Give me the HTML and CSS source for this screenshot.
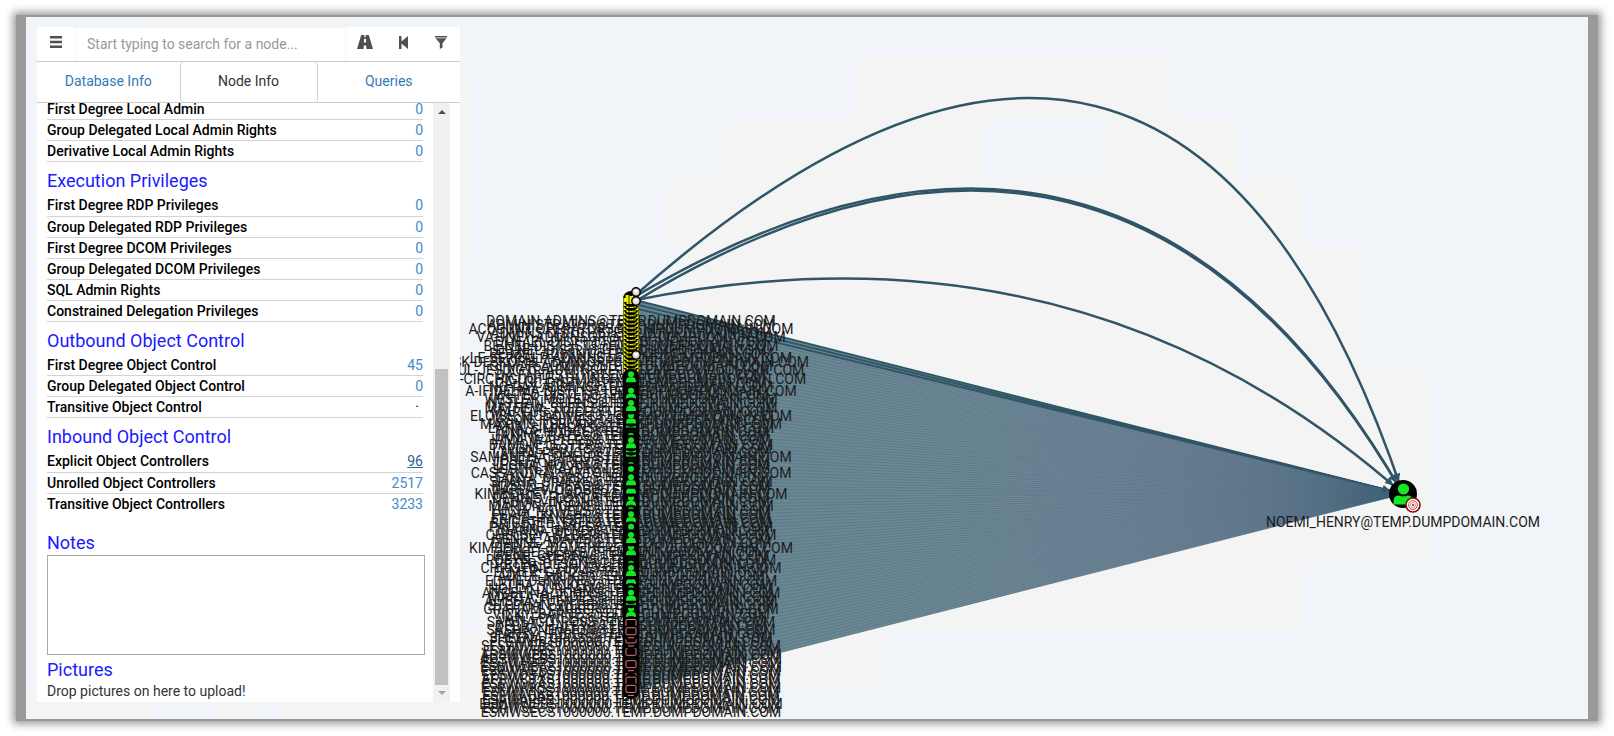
FILE: index.html
```html
<!DOCTYPE html>
<html lang="en">
<head>
<meta charset="utf-8">
<title>Node Info</title>
<link rel="stylesheet" href="styles.css">
</head>
<body>
<div class="backdrop">
<main class="app">
  <svg class="graph" viewBox="26 17 1562 702" role="img" aria-label="Inbound object control graph">
    <g class="tiles">
      <rect x="856" y="55" width="316" height="63"/>
      <rect x="725" y="118" width="258" height="63"/>
      <rect x="1107" y="118" width="131" height="63"/>
      <rect x="664" y="181" width="639" height="66"/>
      <rect x="683" y="247" width="682" height="126"/>
      <rect x="838" y="373" width="592" height="192"/>
      <rect x="780" y="565" width="523" height="65"/>
      <rect x="280" y="630" width="602" height="63"/>
      <rect x="215" y="693" width="43" height="26"/>
      <rect x="280" y="693" width="500" height="26"/>
      <rect x="26" y="693" width="126" height="26"/>
      <rect x="150" y="17" width="194" height="12"/>
      <rect x="460" y="80" width="11" height="190"/>
    </g>
    <defs>
      <linearGradient id="fan" x1="0" x2="1" y1="0" y2="0">
        <stop offset="0" stop-color="#67868f"/>
        <stop offset="0.5" stop-color="#6f8896"/>
        <stop offset="0.7" stop-color="#758798"/>
        <stop offset="0.93" stop-color="#738496"/>
        <stop offset="1" stop-color="#4d6b80"/>
      </linearGradient>
    </defs>
    <polygon points="631,299 1403,494 631,691" fill="url(#fan)"/>
    <g id="edges" class="edges"></g>
    <g id="labels" class="labels"></g>
    <g id="nodes"></g>
    <g>
      <circle cx="1403" cy="494" r="14"/>
      <circle cx="1403.500" cy="489" r="5.600" fill="#17e625"/>
      <path d="M1393.500 504.500v-3.500q0-5.500 5.500-5.500q4 1.700 8.500 0q5.200 0 5.200 5.500v3.500z" fill="#17e625"/>
      <circle cx="1413" cy="505" r="7" fill="#fff" stroke="#8c0d0d" stroke-width="1.600"/>
      <circle cx="1413" cy="505" r="4.400" fill="none" stroke="#b33" stroke-width=".9"/>
      <circle cx="1413" cy="505" r="2.600" fill="none" stroke="#b33" stroke-width=".5"/>
      <circle cx="1413" cy="505" r="1" fill="#a11"/>
      <text class="target" x="1403" y="527">NOEMI_HENRY@TEMP.DUMPDOMAIN.COM</text>
    </g>
  </svg>

  <section class="panel">
    <header class="search">
      <button class="tool menu" type="button" aria-label="More info">
        <svg width="12" height="12" viewBox="0 0 12 12"><path d="M0 0h12v2.600H0zM0 4.700h12v2.600H0zM0 9.400h12V12H0z"/></svg>
      </button>
      <input class="query" type="text" placeholder="Start typing to search for a node..." aria-label="Search for a node">
      <button class="tool" type="button" aria-label="Pathfinding">
        <svg width="16" height="14" viewBox="0 0 16 14"><path d="M4.200 0h3.200L7.200 2h1.600L8.600 0h3.200L16 14H9.400L9.200 10.500H6.800L6.600 14H0zM7.100 3.800L6.900 7.500h2.200L8.900 3.800z" fill-rule="evenodd"/></svg>
      </button>
      <button class="tool" type="button" aria-label="Back">
        <svg width="9" height="13" viewBox="0 0 9 13"><path d="M0 0h2.500v5.600L9 0v13L2.500 7.400V13H0z"/></svg>
      </button>
      <button class="tool" type="button" aria-label="Filter edge types">
        <svg width="12" height="13" viewBox="0 0 12 13"><path d="M0 0h12v1.500H0zM.5 2.300h11L7.500 7.300V11.500L4.800 13V7.300z"/></svg>
      </button>
    </header>
    <nav class="tabs">
      <a class="tab" href="#database">Database Info</a>
      <a class="tab active" href="#node" aria-current="page">Node Info</a>
      <a class="tab" href="#queries">Queries</a>
    </nav>
    <div class="body">
      <div class="content">
        <table>
          <tr><th scope="row">First Degree Local Admin</th><td><a href="#n">0</a></td></tr>
          <tr><th scope="row">Group Delegated Local Admin Rights</th><td><a href="#n">0</a></td></tr>
          <tr><th scope="row">Derivative Local Admin Rights</th><td><a href="#n">0</a></td></tr>
        </table>
        <h2>Execution Privileges</h2>
        <table>
          <tr><th scope="row">First Degree RDP Privileges</th><td><a href="#n">0</a></td></tr>
          <tr><th scope="row">Group Delegated RDP Privileges</th><td><a href="#n">0</a></td></tr>
          <tr><th scope="row">First Degree DCOM Privileges</th><td><a href="#n">0</a></td></tr>
          <tr><th scope="row">Group Delegated DCOM Privileges</th><td><a href="#n">0</a></td></tr>
          <tr><th scope="row">SQL Admin Rights</th><td><a href="#n">0</a></td></tr>
          <tr><th scope="row">Constrained Delegation Privileges</th><td><a href="#n">0</a></td></tr>
        </table>
        <h2>Outbound Object Control</h2>
        <table>
          <tr><th scope="row">First Degree Object Control</th><td><a href="#n">45</a></td></tr>
          <tr><th scope="row">Group Delegated Object Control</th><td><a href="#n">0</a></td></tr>
          <tr><th scope="row">Transitive Object Control</th><td><span class="loading">·</span></td></tr>
        </table>
        <h2>Inbound Object Control</h2>
        <table class="last">
          <tr><th scope="row">Explicit Object Controllers</th><td><a class="hovered" href="#n">96</a></td></tr>
          <tr><th scope="row">Unrolled Object Controllers</th><td><a href="#n">2517</a></td></tr>
          <tr><th scope="row">Transitive Object Controllers</th><td><a href="#n">3233</a></td></tr>
        </table>
        <h2 class="notes-title"><label for="notes">Notes</label></h2>
        <textarea id="notes"></textarea>
        <h2 class="pictures-title">Pictures</h2>
        <p class="drop">Drop pictures on here to upload!</p>
      </div>
      <div class="scrollbar" aria-hidden="true">
        <svg width="8" height="4" viewBox="0 0 8 4"><path d="M0 4L4 0l4 4z" fill="#505050"/></svg>
        <div class="track"><div class="thumb"></div></div>
        <svg width="8" height="4" viewBox="0 0 8 4"><path d="M0 0l4 4 4-4z" fill="#a3a3a3"/></svg>
      </div>
    </div>
  </section>
</main>
</div>
<script src="graph.js"></script>
</body>
</html>
```

FILE: styles.css
```css
* { box-sizing: border-box; }

body {
  margin: 0;
  height: 100vh;
  display: flex;
  padding: 15px 16px;
  background: #fff;
  font-family: Roboto, "Liberation Sans", sans-serif;
  font-size: 14px;
  line-height: 20px;
  color: #333;
}

.backdrop {
  flex: 1;
  display: flex;
  padding: 2px 10px;
  background: #999;
  box-shadow: 0 0 8px 3px #999;
}

.app {
  flex: 1;
  display: grid;
  grid-template: minmax(0, 1fr) / minmax(0, 1fr);
  background: #f1f5fa;
  overflow: hidden;
}

.graph {
  grid-area: 1 / 1;
  width: 100%;
  height: 100%;
}

.tiles { fill: #f4f4f4; }
.edges { fill: none; stroke: #2f5566; }
.edges .straight { stroke: #46677c; stroke-width: 1; opacity: 0.4; }
.edges .top { stroke-width: 2; }
.edges .curve { stroke-width: 2.5; }
.edges .arrow { fill: #2f5566; stroke: none; }
.labels text, .target { font-size: 14px; text-anchor: middle; fill: #1c1c1c; }

.panel {
  grid-area: 1 / 1;
  justify-self: start;
  width: 423px;
  margin: 10px 11px 17px;
  display: flex;
  flex-direction: column;
  background: #fff;
  min-height: 0;
}

.search {
  display: flex;
  height: 35px;
  border-bottom: 1px solid #ccc;
}

.tool {
  width: 38px;
  padding: 0 0 4px;
  border: 0;
  background: none;
  display: flex;
  align-items: center;
  justify-content: center;
  fill: #505050;
}

.query {
  flex: 1;
  min-width: 0;
  border: 1px solid #f6f6f6;
  border-bottom: 0;
  padding: 0 11px 2px;
  font: inherit;
  color: #333;
}

.query::placeholder { color: #999; opacity: 1; }

.tabs {
  display: flex;
  height: 41px;
  border-bottom: 1px solid #ccc;
}

.tab {
  flex: 1;
  text-align: center;
  line-height: 38px;
  color: #337ab7;
  text-decoration: none;
}

.tab.active {
  flex: 0 0 138px;
  border: 1px solid #ccc;
  border-width: 0 1px;
  border-radius: 4px;
  color: #333;
}

.body {
  flex: 1;
  min-height: 0;
  display: flex;
  padding: 0 10px;
}

.content {
  flex: 1;
  display: flex;
  flex-direction: column;
  justify-content: flex-end;
  overflow: hidden;
  padding-right: 8px;
}

table {
  width: calc(100% - 2px);
  flex: none;
  border-collapse: collapse;
  color: #000;
}

th, td {
  height: 21px;
  padding: 0;
  border-bottom: 1px solid #d3d3d3;
  font-weight: 500;
  line-height: 20px;
  text-align: left;
}

td { text-align: right; font-weight: 400; }
td a { color: #428bca; text-decoration: none; }
td a.hovered { color: #2a6496; text-decoration: underline; }
.loading { padding-right: 4px; }
.last tr:last-child > * { border-bottom: 0; }

h2 {
  flex: none;
  margin: 0;
  padding-top: 9px;
  height: 33px;
  font-size: 18px;
  line-height: 20px;
  font-weight: 400;
  color: #1a1aff;
}

.notes-title { height: 41px; padding-top: 19px; }

textarea {
  flex: none;
  height: 100px;
  margin: 0;
  border: 1px solid #a9a9a9;
  resize: none;
  font: inherit;
}

.pictures-title { height: 26px; padding-top: 5px; }
.drop { flex: none; margin: 0; height: 21px; }

.scrollbar {
  width: 17px;
  background: #f1f1f1;
  display: flex;
  flex-direction: column;
  align-items: center;
  padding: 7px 0;
}

.track {
  flex: 1;
  width: 13px;
  padding: 6px 0;
  display: flex;
  flex-direction: column;
  justify-content: flex-end;
}

.thumb { height: 56%; background: #c1c1c1; }
```

FILE: graph.js
```js
const NS = "http://www.w3.org/2000/svg";
const DOMAIN = "TEMP.DUMPDOMAIN.COM";
const COLUMN_X = 631;
const FIRST_Y = 299;
const STEP = 4.12;
const TARGET = { x: 1403, y: 494 };

const groups = [
  "DOMAIN ADMINS", "ADMINISTRATOR", "ACCOUNT OPERATORS", "ADMINS-DIST01", "VA-JNEY-ADMINSGR",
  "DI-NAEL-DIST1", "BE-NEL-DISTLIST1", "DE-NEL-DISTLI", "RE-MEL-ADMIN1", "LE-SERRALP-ADMINS1",
  "SK-DESKOFHI-ADMINGRP01", "GI-MAR-ADMINS", "UL-JESDIGTR-ADMINGRP1", "DA-FAI-DISTL1",
  "I-CIRCHIGUOTE-ADMINGR1", "CA-LUC-DISTLI", "NO-RAY-ADMINS", "A-IFIDELMA-DISTLIST10", "WI-TED-DISTL1"
];
const users = [
  "WESLEY_MOYERS", "NATHAN_BURNS", "MATHEW_STEELE", "MARCUS_PRICE", "ELOISE_MCDOWELL12",
  "JASON_HOLMES", "MAXIMO_LEBLANC", "LANA_SIMMONS", "TONYA_HODGE", "JANINE_BATES",
  "IRMA_WALTERS", "DAMON_LESTER", "TYRONE_POTTS", "LAURA_PRINCE", "SAMANTHA_PHELPS1",
  "JOSEFA_BARRY", "LEONA_NOLAN", "JUSTIN_MAYER", "CASSANDRA_SAXTON", "TANYA_MORSE",
  "SHANA_SPARKS", "RUSSELL_HEAD", "DARLA_WOODS", "KIMBERLEY_HARPER", "DENNIS_FLOYD",
  "NADIA_VINSON", "MARION_HORNE", "LUCIA_POWERS", "PEARL_KNIGHT", "ERICA_HANSEN",
  "BRIGETTE_TATE", "PAULINE_HAYES", "JOANNA_BOYD", "CHELSEY_WEBER", "HENRY_ADAMS",
  "DIANNE_MEYER", "KIMBERLEY_DOUGHER", "JORGE_BLAKE", "IRENE_GUERRA", "ROBYN_STEVENS",
  "PETER_OLSON", "CHRISTINE_FINLEY", "ELMER_GARZA", "ADELE_HICKS", "ELVIN_DUNNING1",
  "LETHA_TUCKER", "HOLLY_DURHAM", "ANGELINA_JOHNS", "MARTA_RHODES", "ALISHA_FUENTES",
  "STEPHAN_WEBB", "GRAHAM_PARKER", "VICKY_BARNES", "JAN_FOWLER", "SANTIAGO_ROSS",
  "DEBRA_HALEY", "SASHA_NEWTON", "PANSY_HUBER", "SHEENA_GROSS"
];
const computers = [
  "FLEWVIR", "SESWWEBS", "ESMWVIRS", "ABSWWEBS", "ADSWWEBS", "ESTWAPPS", "ESMWDBAS", "ESRWWEBS", "EESWDBAS",
  "APPWCTXS", "ESRWDBAS", "FSRWWKSS", "ESMWVIRS", "FSEWADAS", "ESAWAPPS", "EEMWWEBS", "EBRWSECS", "ESMWSECS"
];

const rows = [
  ...groups.map(name => ({ kind: "group", label: `${name}@${DOMAIN}` })),
  ...users.map(name => ({ kind: "user", label: `${name}@${DOMAIN}` })),
  ...computers.map(name => ({ kind: "computer", label: `${name}1000000.${DOMAIN}` }))
];
rows.forEach((row, i) => { row.y = FIRST_Y + i * STEP; });

function add(parent, tag, attrs, text) {
  const el = document.createElementNS(NS, tag);
  for (const key in attrs) el.setAttribute(key, attrs[key]);
  if (text) el.textContent = text;
  parent.appendChild(el);
  return el;
}

const edges = document.getElementById("edges");
const labels = document.getElementById("labels");
const nodes = document.getElementById("nodes");

function arrow(fromX, fromY) {
  const a = Math.atan2(TARGET.y - fromY, TARGET.x - fromX);
  const point = (r, side) =>
    `${TARGET.x - r * Math.cos(a) - side * Math.sin(a)},${TARGET.y - r * Math.sin(a) + side * Math.cos(a)}`;
  add(edges, "polygon", { class: "arrow", points: [point(13, 0), point(21, 4), point(21, -4)].join(" ") });
}

rows.forEach((row, i) => {
  add(edges, "line", {
    class: i < 3 ? "top" : "straight", x1: COLUMN_X, y1: row.y, x2: TARGET.x, y2: TARGET.y
  });
  add(labels, "text", { x: COLUMN_X, y: row.y + 27 }, row.label);
});
arrow(COLUMN_X, FIRST_Y);

/* Parallel relationships bow upwards from the first nodes. */
[[299, 1175, -184], [299, 1122, 5], [304, 1118, 5], [301, 1080, 209]].forEach(([y, cx, cy]) => {
  add(edges, "path", { class: "curve", d: `M${COLUMN_X} ${y}Q${cx} ${cy} ${TARGET.x} ${TARGET.y}` });
  arrow(cx, cy);
});

const glyphs = {
  group(x, y) {
    add(nodes, "path", {
      d: `M${x - 7.5} ${y + 3}v-4h2v-3h4v1h3v-1h4v3h2v4h-3v2h-9v-2z`, fill: "#eeee00"
    });
    add(nodes, "path", { d: `M${x - 2} ${y - 4}v9M${x + 3} ${y - 4}v9`, stroke: "#000", "stroke-width": 0.8 });
  },
  user(x, y) {
    add(nodes, "circle", { cx: x, cy: y - 3, r: 3, fill: "#17e625" });
    add(nodes, "path", { d: `M${x - 5} ${y + 5}q0-5 3-5h4q3 0 3 5z`, fill: "#17e625" });
  },
  computer(x, y) {
    add(nodes, "rect", {
      x: x - 5, y: y - 5, width: 10, height: 7, rx: 1, fill: "none", stroke: "#e67873"
    });
    add(nodes, "path", { d: `M${x - 3} ${y + 5}h6`, stroke: "#e67873" });
  }
};

/* Overlapping circles are stacked out of order, so each hides a different part of its neighbours. */
rows
  .map((row, i) => {
    const hash = Math.abs(Math.sin((i + 1) * 12.9898) * 43758.5453) % 1;
    return { row, rank: row.kind === "group" ? -i : 1 + hash };
  })
  .sort((a, b) => a.rank - b.rank)
  .forEach(({ row }) => {
    add(nodes, "circle", { cx: COLUMN_X, cy: row.y, r: row.kind === "group" ? 8 : 8.5 });
    glyphs[row.kind](COLUMN_X, row.y);
  });

[292, 301, 355].forEach(y => {
  add(nodes, "circle", { cx: 636, cy: y, r: 4.2, fill: "#ddd", stroke: "#000", "stroke-width": 1.4 });
  add(nodes, "path", { d: `M633 ${y - 1}l1.500-1.500h3l1.500 1.500-3 3.500z`, fill: "#fff", stroke: "#aaa", "stroke-width": 0.4 });
});
```
